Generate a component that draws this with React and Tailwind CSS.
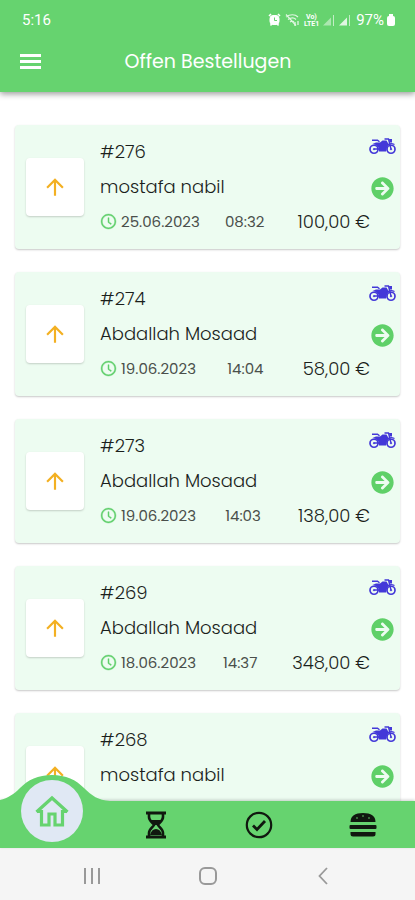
import { AiOutlineClockCircle } from "react-icons/ai";
import { FaArrowCircleRight } from "react-icons/fa";
import { MdArrowUpward } from "react-icons/md";

const ORDERS = [
  { id: 276, name: "mostafa nabil", date: "25.06.2023", time: "08:32", price: "100,00 €" },
  { id: 274, name: "Abdallah Mosaad", date: "19.06.2023", time: "14:04", price: "58,00 €" },
  { id: 273, name: "Abdallah Mosaad", date: "19.06.2023", time: "14:03", price: "138,00 €" },
  { id: 269, name: "Abdallah Mosaad", date: "18.06.2023", time: "14:37", price: "348,00 €" },
  { id: 268, name: "mostafa nabil", date: "18.06.2023", time: "14:21", price: "227,00 €" },
];

function MotorcycleIcon() {
  return (
    <svg viewBox="0 0 54 34" className="h-[17px] w-[27px] shrink-0 text-[#4338d8]" fill="none" stroke="currentColor">
      <circle cx="10" cy="22.500" r="8" strokeWidth="3.4" />
      <circle cx="44" cy="22.500" r="8" strokeWidth="3.4" />
      <circle cx="10" cy="22.500" r="1.500" fill="currentColor" />
      <circle cx="44" cy="22.500" r="1.500" fill="currentColor" />
      <path d="M6 4.500h11l4 3" strokeWidth="3" />
      <path d="M7 12l7-3h8l5-4h8l4 7-3 7-2 8H20l-1-8-5-5z" fill="currentColor" stroke="none" />
      <path d="M32 2h7l5 20M10 22h10" strokeWidth="2.8" strokeLinecap="round" />
      <path d="M40 2h6v7h-5z" fill="currentColor" stroke="none" />
      <path d="M36 15c4-4 9-5 15-2" strokeWidth="2.5" />
    </svg>
  );
}

function HomeIcon() {
  return (
    <svg viewBox="0 0 34 34" className="size-[34px] text-[#66d36f]" fill="none" stroke="currentColor" strokeWidth="3.200">
      <path d="M2 17.500h4.500V31H14V20h6v11h7.500V17.500H32" />
      <path d="M1.500 18L17 4l15.500 14" />
    </svg>
  );
}

function HourglassIcon() {
  return (
    <svg viewBox="0 0 22 28" className="h-7 w-[22px]" fill="none" stroke="currentColor" strokeWidth="2.600">
      <path d="M1 2h20M1 26h20" strokeWidth="3" />
      <path d="M4 2v4c0 4 4 6 5 8-1 2-5 4-5 8v4M18 2v4c0 4-4 6-5 8 1 2 5 4 5 8v4" />
      <path d="M5 9h12l-5 5h-2zM5 24c1-4 3-6 6-6s5 2 6 6z" fill="currentColor" stroke="none" />
    </svg>
  );
}

function CheckIcon() {
  return (
    <svg viewBox="0 0 28 28" className="size-7" fill="none" stroke="currentColor">
      <circle cx="14" cy="14" r="12.200" strokeWidth="2.200" />
      <path d="M8 14.500l4 4 8-8.500" strokeWidth="2.800" />
    </svg>
  );
}

function BurgerIcon() {
  return (
    <svg viewBox="0 0 28 28" className="size-7" fill="currentColor">
      <path d="M1.500 11C1.500 5 6 2 14 2s12.500 3 12.500 9z" />
      <rect x="0.500" y="14" width="27" height="4" rx="1" />
      <path d="M1.500 21h25v2a2.500 2.500 0 0 1-2.500 2.500H4A2.500 2.500 0 0 1 1.500 23z" />
      <g fill="#66d36f">
        <circle cx="8" cy="7" r="0.800" />
        <circle cx="14" cy="5" r="0.800" />
        <circle cx="20" cy="7" r="0.800" />
      </g>
    </svg>
  );
}

function StatusIcons() {
  return (
    <svg viewBox="0 0 84 14" className="h-3.5 w-[84px]" fill="none" stroke="currentColor">
      <rect x="2" y="2.500" width="9" height="9" rx="3" fill="currentColor" />
      <path d="M1 3l2-2M12 3l-2-2M2.500 12.500l1.500-2M10.500 12.500l-1.500-2" strokeWidth="1.500" />
      <path d="M6.500 4.500v3H9" stroke="#66d36f" />
      <g opacity="0.8">
        <path d="M18 4c4-3 9-3 12 0M20 6.500c3-2 6-2 8 0M22 9c1.500-1 3-1 4 0M18 1.500l10 11" strokeWidth="1.200" />
        <path d="M27 9v4M30 8v4" strokeWidth="1.300" />
      </g>
      <g fill="currentColor" stroke="none" fontFamily="Roboto, sans-serif" fontWeight="700" fontSize="7">
        <text x="38" y="6">Vo)</text>
        <text x="36" y="13">LTE1</text>
      </g>
      <path d="M55 12.500l8-8v8z" fill="currentColor" stroke="none" opacity="0.450" />
      <path d="M65.500 2v11M81.500 2v11" opacity="0.600" />
      <path d="M71 12.500l8-8v8z" fill="currentColor" stroke="none" opacity="0.800" />
    </svg>
  );
}

function OrderCard({ order }) {
  return (
    <article className="flex rounded-sm bg-[#edfcf1] pr-[5px] pl-[11px] shadow-[0_1px_2px_rgba(0,0,0,0.22)]">
      <div className="flex h-[58px] w-[58px] shrink-0 items-center justify-center self-center rounded-sm bg-white shadow-[0_1px_2px_rgba(0,0,0,0.18)]">
        <MdArrowUpward size={26} className="text-[#f3b022]" />
      </div>
      <div className="ml-4 min-w-0 flex-1 pt-[9px] pb-2.5 text-[18px] leading-[35px] font-light text-[#1b1f1c]">
        <h2>#{order.id}</h2>
        <p>{order.name}</p>
        <div className="flex items-center justify-between whitespace-nowrap">
          <span className="flex items-center gap-1 text-[15px] font-normal text-[#4a4f4b]">
            <AiOutlineClockCircle size={17} strokeWidth={25} className="text-[#5fcf6a]" />
            {order.date}
          </span>
          <span className="text-[15px] font-normal text-[#4a4f4b]">{order.time}</span>
          <span className="ml-2">{order.price}</span>
        </div>
      </div>
      <div className="flex w-[25px] shrink-0 flex-col items-center gap-[22px] pt-[13px]">
        <MotorcycleIcon />
        <button aria-label={`Bestellung ${order.id}`} className="text-[#5fd068]">
          <FaArrowCircleRight size={23} />
        </button>
      </div>
    </article>
  );
}

export default function App() {
  return (
    <div className="flex h-screen flex-col overflow-hidden bg-white font-['Poppins','Inter',sans-serif]">
      <header className="relative z-10 shrink-0 bg-[#66d36f] text-white shadow-[0_2px_6px_rgba(0,0,0,0.4)]">
        <div className="flex h-10 items-center justify-between pr-5 pl-[22px] font-[Roboto] text-[15px]">
          <span>5:16</span>
          <div className="flex items-center">
            <StatusIcons />
            <span className="mr-[3px] ml-1">97%</span>
            <span className="flex flex-col items-center">
              <span className="h-0.5 w-1 bg-white" />
              <span className="h-2.5 w-2 rounded-xs bg-white" />
            </span>
          </div>
        </div>
        <div className="flex h-[52px] items-start px-5 pt-2">
          <button aria-label="Menü" className="mt-1.5 flex flex-col gap-[3px]">
            <span className="h-[3px] w-[21px] bg-white" />
            <span className="h-[3px] w-[21px] bg-white" />
            <span className="h-[3px] w-[21px] bg-white" />
          </button>
          <h1 className="flex-1 pr-5 text-center text-[19px] leading-7">Offen Bestellugen</h1>
        </div>
      </header>

      <main className="flex min-h-0 flex-1 flex-col gap-[23px] overflow-hidden px-[15px] pt-[33px]">
        {ORDERS.map((order) => (
          <OrderCard key={order.id} order={order} />
        ))}
      </main>

      <nav className="relative z-10 grid h-[47px] shrink-0 grid-cols-4 bg-[#66d36f] text-[#10180f] shadow-[0_-1px_3px_rgba(0,0,0,0.2)]">
        <button aria-label="Start" className="relative">
          <svg viewBox="0 0 110 28" className="absolute -top-[27px] left-0 h-7 w-[110px]">
            <path d="M0 26C8 24 14 20 20 14 28 6 38 1 52 1s24 5 32 13c8 8 14 12 26 13v1H0z" fill="#66d36f" />
          </svg>
          <span className="absolute -top-[21px] left-1/2 flex size-[62px] -translate-x-1/2 items-center justify-center rounded-full bg-[#e0e8f4]">
            <HomeIcon />
          </span>
        </button>
        <button aria-label="Wartend" className="flex items-center justify-center">
          <HourglassIcon />
        </button>
        <button aria-label="Erledigt" className="flex items-center justify-center">
          <CheckIcon />
        </button>
        <button aria-label="Speisen" className="flex items-center justify-center">
          <BurgerIcon />
        </button>
      </nav>

      <div className="flex h-[52px] shrink-0 items-center justify-between bg-[#f5f5f5] px-[82px] pt-1 text-[#999999]">
        <button aria-label="Letzte Apps" className="flex w-5 justify-center gap-[5px]">
          <span className="h-4 w-0.5 bg-current" />
          <span className="h-4 w-0.5 bg-current" />
          <span className="h-4 w-0.5 bg-current" />
        </button>
        <button aria-label="Startbildschirm" className="size-[18px] rounded-md border-2 border-current" />
        <button aria-label="Zurück" className="flex w-5 justify-center">
          <svg viewBox="0 0 10 18" className="h-[18px] w-2.5" fill="none" stroke="currentColor" strokeWidth="1.800">
            <path d="M9 1L1.500 9 9 17" />
          </svg>
        </button>
      </div>
    </div>
  );
}
